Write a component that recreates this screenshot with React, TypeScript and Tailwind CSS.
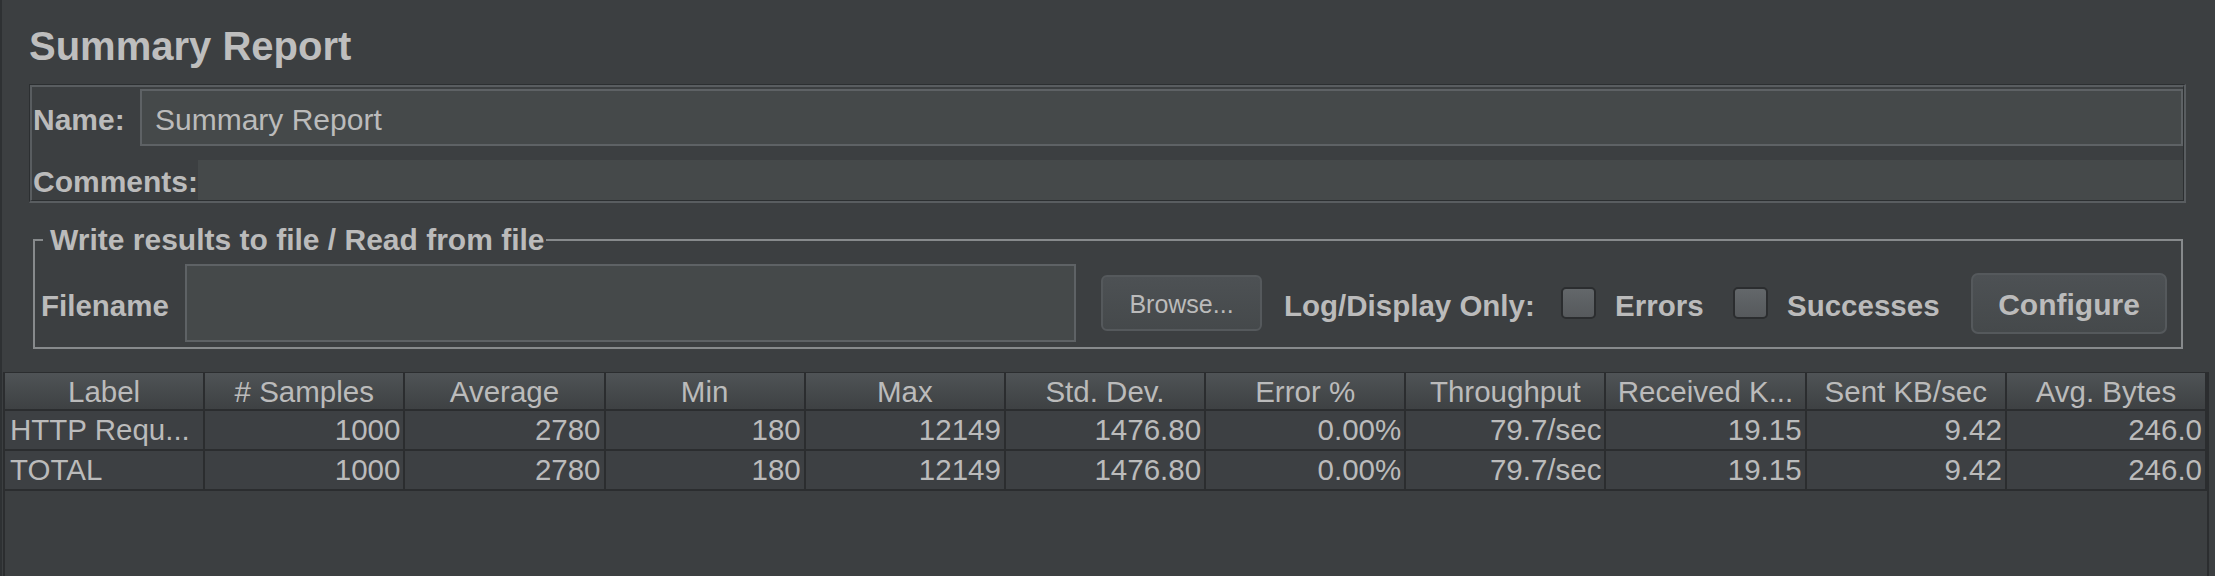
import React from 'react';

const columns = [
  'Label',
  '# Samples',
  'Average',
  'Min',
  'Max',
  'Std. Dev.',
  'Error %',
  'Throughput',
  'Received K...',
  'Sent KB/sec',
  'Avg. Bytes',
];

const rows = [
  ['HTTP Requ...', '1000', '2780', '180', '12149', '1476.80', '0.00%', '79.7/sec', '19.15', '9.42', '246.0'],
  ['TOTAL', '1000', '2780', '180', '12149', '1476.80', '0.00%', '79.7/sec', '19.15', '9.42', '246.0'],
];

function Checkbox() {
  return (
    <div className="w-[35px] h-[32px] rounded-[5px] border-2 border-[#2b2d2f] bg-linear-to-b from-[#63676a] to-[#56595c] shrink-0" />
  );
}

export default function App() {
  return (
    <div className="w-[2215px] h-[576px] overflow-hidden bg-[#3c3f41] text-[#bbbbbb] border-l-2 border-[#2e3133] flex flex-col font-['Liberation_Sans',Arial,sans-serif]">
      {/* title */}
      <div className="ml-[27px] mt-[24px] h-[45px] leading-[45px] text-[40px] font-bold text-[#bebebe] whitespace-nowrap">
        Summary Report
      </div>

      {/* name / comments panel, etched border */}
      <div className="ml-[27px] mt-[15px] w-[2157px] border-t border-l border-b-2 border-r-2 border-t-[#2c2f31] border-l-[#2c2f31] border-b-[#595d60] border-r-[#595d60]">
        <div className="border-t-2 border-l-2 border-b border-r border-t-[#595d60] border-l-[#595d60] border-b-[#2c2f31] border-r-[#2c2f31] pt-[2px]">
          <div className="flex items-center h-[57px]">
            <div className="w-[108px] pl-[1px] pt-[4px] text-[30px] font-bold leading-[34px]">Name:</div>
            <div className="flex-1 h-full border-2 border-[#5e6265] bg-[#45494a] flex items-center pl-[13px] pt-[4px] text-[30px] leading-[34px] whitespace-nowrap">
              Summary Report
            </div>
          </div>
          <div className="flex items-stretch h-[40px] mt-[14px]">
            <div className="w-[166px] pl-[1px] pt-[5px] text-[30px] font-bold leading-[34px] whitespace-nowrap">Comments:</div>
            <div className="flex-1 bg-[#45494a]" />
          </div>
        </div>
      </div>

      {/* write results group */}
      <fieldset className="ml-[31px] mt-[20px] w-[2150px] border-2 border-[#878a8c] pl-[6px] pb-[5px]">
        <legend className="ml-[2px] pl-[7px] pr-[1px] text-[30px] font-bold leading-[34px] whitespace-nowrap">
          Write results to file / Read from file
        </legend>
        <div className="flex items-center h-[78px] mt-[7px] text-[29.5px] leading-[34px] whitespace-nowrap">
          <div className="w-[144px] font-bold pt-[5px]">Filename</div>
          <div className="w-[891px] h-full border-2 border-[#5e6265] bg-[#45494a]" />
          <button className="ml-[25px] w-[161px] h-[56px] rounded-[6px] border-2 border-[#55595c] bg-linear-to-b from-[#4d5154] to-[#45494b] text-[25px] text-[#bbbbbb] flex items-center justify-center pt-[2px]">
            Browse...
          </button>
          <div className="ml-[22px] w-[251px] font-bold pt-[5px]">Log/Display Only:</div>
          <div className="ml-[26px]">
            <Checkbox />
          </div>
          <div className="ml-[19px] w-[89px] font-bold pt-[5px]">Errors</div>
          <div className="ml-[29px]">
            <Checkbox />
          </div>
          <div className="ml-[19px] w-[153px] font-bold pt-[5px]">Successes</div>
          <button className="ml-[31px] w-[196px] h-[61px] rounded-[7px] border-2 border-[#55595c] bg-linear-to-b from-[#4d5154] to-[#45494b] text-[30px] font-bold text-[#bbbbbb] flex items-center justify-center pt-[4px]">
            Configure
          </button>
        </div>
      </fieldset>

      {/* results table */}
      <div className="ml-[1px] mt-[23px] w-[2206px] flex-1 border-t border-l-2 border-r-2 border-[#2b2d2f]">
        <div className="grid grid-cols-[repeat(11,minmax(0,1fr))] text-[29.5px] leading-[34px] whitespace-nowrap">
          {columns.map(c => (
            <div
              key={c}
              className="h-[38px] flex items-center justify-center border-r-2 border-b-2 border-[#2b2d2f] bg-linear-to-b from-[#4f5356] to-[#3e4143] overflow-hidden pt-[1px]"
            >
              {c}
            </div>
          ))}
          {rows.map((r, ri) =>
            r.map((v, ci) => (
              <div
                key={`${ri}-${ci}`}
                className={`h-[40px] flex items-center border-r-2 border-b-2 border-[#2b2d2f] bg-[#3d4043] overflow-hidden ${
                  ci === 0 ? 'justify-start pl-[5px]' : 'justify-end pr-[3px]'
                }`}
              >
                {v}
              </div>
            ))
          )}
        </div>
      </div>
    </div>
  );
}
